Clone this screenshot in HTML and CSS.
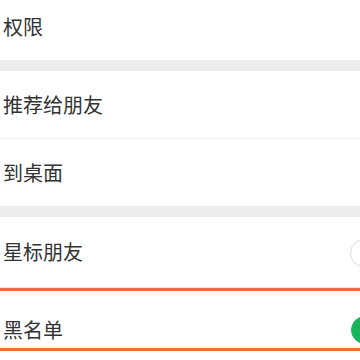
FILE: index.html
```html
<!DOCTYPE html>
<html lang="zh">
<head>
<meta charset="utf-8">
<link rel="stylesheet" href="styles.css">
</head>
<body>
<div class="page">
  <div class="row row-first"><span class="label">权限</span></div>
  <div class="gap"></div>
  <div class="row row-line"><span class="label">推荐给朋友</span></div>
  <div class="row"><span class="label">到桌面</span></div>
  <div class="gap"></div>
  <div class="row row-star"><span class="label">星标朋友</span><span class="switch-clip"><span class="toggle"></span></span></div>
  <div class="row row-black"><span class="label">黑名单</span><span class="switch-clip on-clip"><span class="toggle on"></span></span></div>
</div>
<div class="highlight"></div>
</body>
</html>
```
FILE: styles.css
```css
html, body {
  margin: 0;
  padding: 0;
  background: #ffffff;
  overflow: hidden;
  width: 360px;
  height: 360px;
}
body {
  position: relative;
  font-family: "Noto Sans CJK SC", "Noto Sans", sans-serif;
  color: #333333;
}
.page {
  margin-top: -6px;
}
.row {
  display: flex;
  align-items: center;
  height: 67px;
  padding-left: 3px;
  background: #ffffff;
}
.row-first {
  height: 66px;
}
.row-line {
  border-bottom: 1px solid #f0f0f0;
}
.row-star {
  height: 70px;
  border-bottom: 1px solid #e4e4e4;
}
.row-black {
  height: 84px;
}
.label {
  font-size: 20px;
  line-height: 24px;
}
.gap {
  height: 11px;
  background: #ededed;
}
.switch-clip {
  margin-left: auto;
  width: 10px;
  height: 28px;
  overflow: hidden;
  flex: none;
  display: block;
}
.row-star .switch-clip {
  margin-top: 2px;
}
.on-clip {
  width: 9px;
}
.toggle {
  display: block;
  width: 50px;
  height: 28px;
  box-sizing: border-box;
  border: 1.5px solid #dadada;
  border-radius: 14px;
  background: #ffffff;
}
.toggle.on {
  border-color: #17b45c;
  background: #17b45c;
}
.highlight {
  position: absolute;
  left: 0;
  width: 360px;
  top: 288px;
  height: 63px;
  box-sizing: border-box;
  border-top: 3px solid #f26b3d;
  border-bottom: 3px solid #f26b3d;
}
```
